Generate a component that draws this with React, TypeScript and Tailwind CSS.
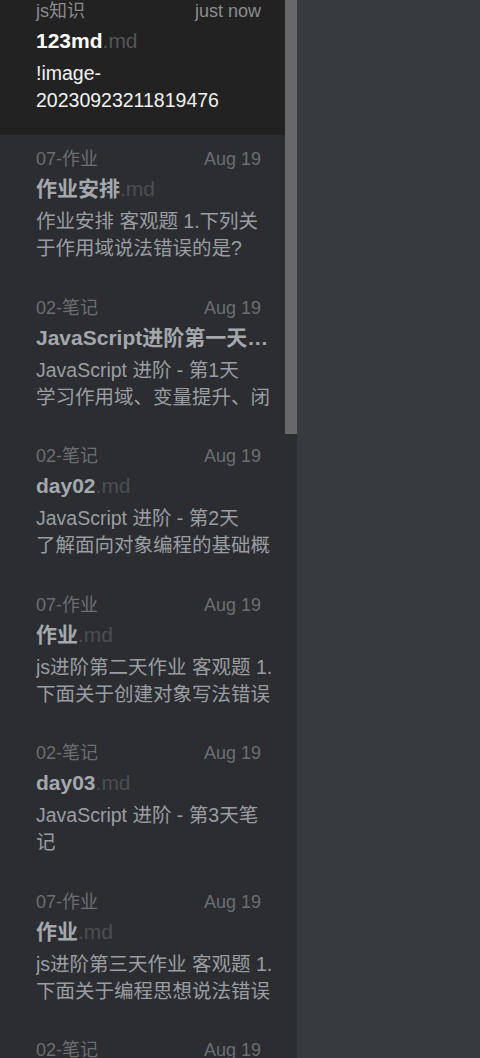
import React from 'react';

type Note = {
  folder: string;
  date: string;
  title: string;
  preview: string;
  active?: boolean;
};

const notes: Note[] = [
  { folder: 'js知识', date: 'just now', title: '123md', preview: '!image-20230923211819476', active: true },
  { folder: '07-作业', date: 'Aug 19', title: '作业安排', preview: '作业安排 客观题 1.下列关于作用域说法错误的是?\nA. 函数内部声明的变量是局部变量' },
  { folder: '02-笔记', date: 'Aug 19', title: 'JavaScript进阶第一天笔记', preview: 'JavaScript 进阶 - 第1天\n学习作用域、变量提升、闭包等语言特征' },
  { folder: '02-笔记', date: 'Aug 19', title: 'day02', preview: 'JavaScript 进阶 - 第2天\n了解面向对象编程的基础概念' },
  { folder: '07-作业', date: 'Aug 19', title: '作业', preview: 'js进阶第二天作业 客观题 1.下面关于创建对象写法错误的是' },
  { folder: '02-笔记', date: 'Aug 19', title: 'day03', preview: 'JavaScript 进阶 - 第3天笔记\n了解构造函数原型对象的语法特征' },
  { folder: '07-作业', date: 'Aug 19', title: '作业', preview: 'js进阶第三天作业 客观题 1.下面关于编程思想说法错误的是' },
  { folder: '02-笔记', date: 'Aug 19', title: 'day04', preview: 'JavaScript 进阶 - 第4天\n深浅拷贝' },
];

const font = { fontFamily: '"Liberation Sans", Arial, "Noto Sans CJK SC", sans-serif' };

const NoteItem: React.FC<{ note: Note }> = ({ note }) => (
  <div className={`pl-[36px] pr-[9px] pt-[12px] pb-[21.5px] ${note.active ? 'bg-[#222223]' : ''}`}>
    <div
      className={`flex justify-between pr-[15px] text-[18px] leading-[24px] ${
        note.active ? 'text-[#8c8c8c]' : 'text-[#6b6e72]'
      }`}
    >
      <span>{note.folder}</span>
      <span>{note.date}</span>
    </div>
    <div
      className={`mt-[2px] truncate text-[21px] leading-[31px] font-bold ${
        note.active ? 'text-white' : 'text-[#a4a8ac]'
      }`}
    >
      {note.title}
      <span className={`font-normal ${note.active ? 'text-[#555555]' : 'text-[#4b4e53]'}`}>.md</span>
    </div>
    <div
      className={`mt-[4px] h-[54px] overflow-hidden whitespace-pre-line text-[19.5px] leading-[27px] ${
        note.active ? 'text-[#f2f2f2]' : 'text-[#9a9da1]'
      }`}
    >
      {note.preview}
    </div>
  </div>
);

export default function App() {
  return (
    <div className="flex h-[1058px] w-[480px] overflow-hidden bg-[#373b40]" style={font}>
      <div className="flex w-[297px] shrink-0 bg-[#2c2d31]">
        <div className="w-[285px] overflow-hidden">
          <div className="-mt-[13.5px]">
            {notes.map((n, i) => (
              <NoteItem key={i} note={n} />
            ))}
          </div>
        </div>
        <div className="w-[12px]">
          <div className="h-[434px] bg-[#686868]" />
        </div>
      </div>
      <div className="flex-1" />
    </div>
  );
}
